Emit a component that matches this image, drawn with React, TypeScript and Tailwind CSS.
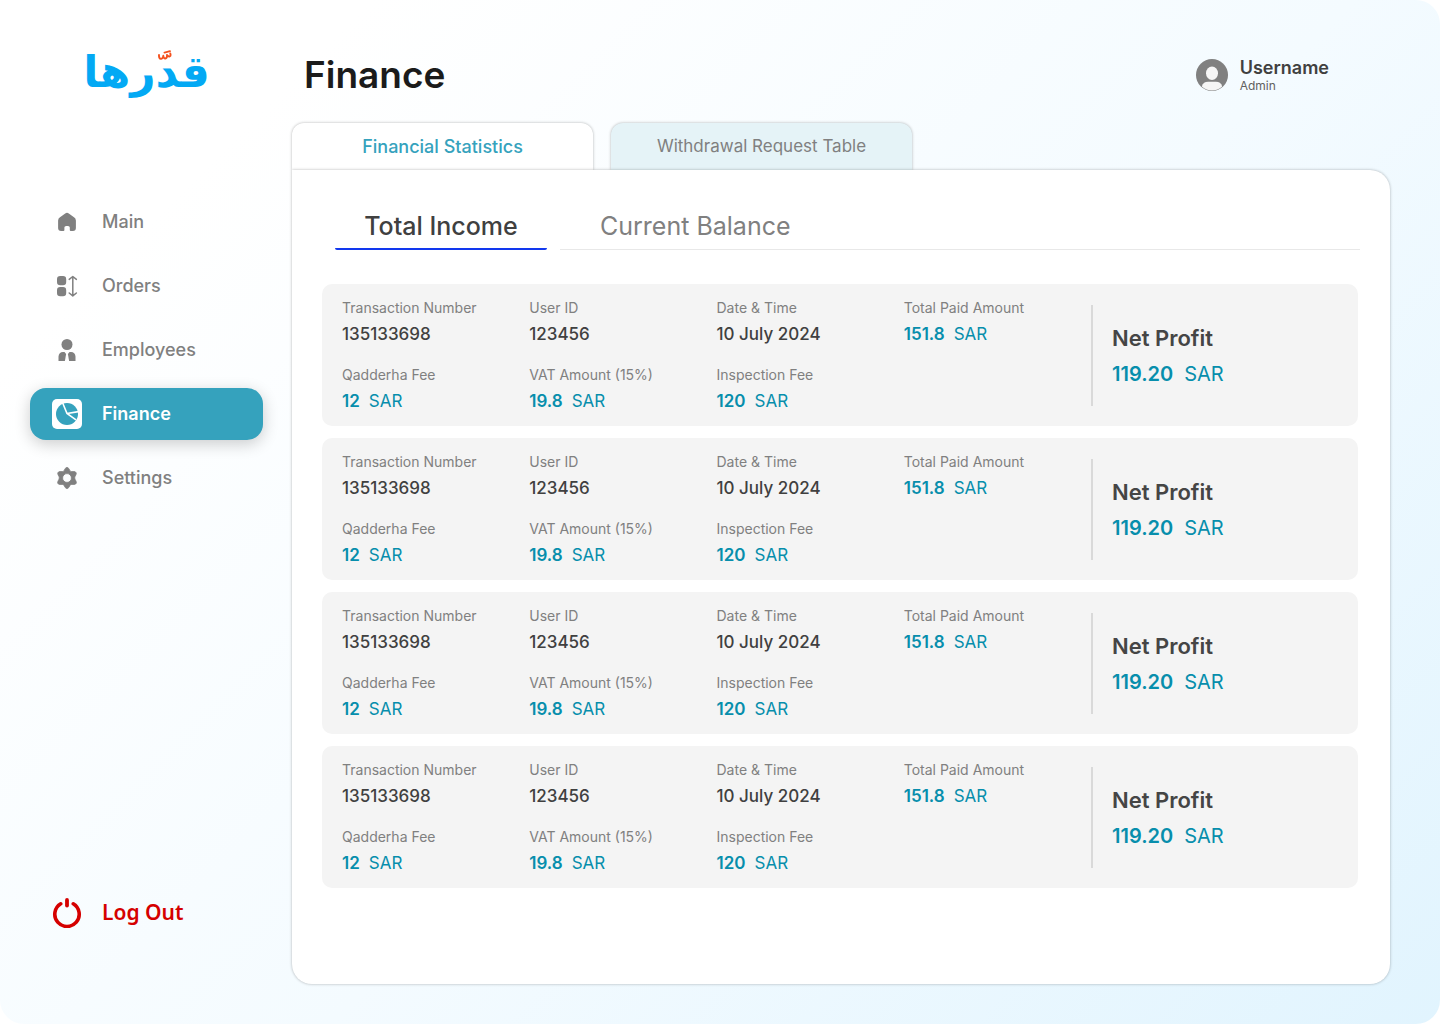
import type { ReactNode } from 'react'

const transactions = [1, 2, 3, 4]

function HomeIcon() {
  return (
    <svg viewBox="0 0 30 30" className="size-[30px]" fill="#808080" aria-hidden="true">
      <path d="M13.2 6.400a3 3 0 0 1 3.600 0l5.200 3.900a4 4 0 0 1 1.900 3.200V21a3 3 0 0 1-3 3h-2.200a.9.9 0 0 1-.9-.9v-2.300c0-1.100-.8-1.800-1.800-1.800h-1.800c-1 0-1.800.7-1.800 1.800v2.300a.9.9 0 0 1-.9.9H9.100a3 3 0 0 1-3-3v-7.500a4 4 0 0 1 1.900-3.200z" />
    </svg>
  )
}

function OrdersIcon() {
  return (
    <svg viewBox="0 0 30 30" className="size-[30px]" fill="#808080" aria-hidden="true">
      <rect x="5" y="5" width="9.200" height="9.200" rx="3.200" />
      <rect x="5" y="16" width="9.200" height="9.200" rx="3.200" />
      <path
        d="M20.800 5.800v18.800M17.200 8.400l3.600-2.900 3.600 2.900M17.200 22l3.600 2.900 3.600-2.900"
        fill="none"
        stroke="#808080"
        strokeWidth="1.500"
        strokeLinecap="round"
        strokeLinejoin="round"
      />
    </svg>
  )
}

function EmployeesIcon() {
  return (
    <svg viewBox="0 0 30 30" className="size-[30px]" fill="#808080" aria-hidden="true">
      <circle cx="15" cy="9.500" r="5.500" />
      <path d="M6.500 26v-4.200c0-3 2-4.900 4.400-4.900h1.600l1.600 2-1.200 7.100z" />
      <path d="M23.500 26v-4.200c0-3-2-4.900-4.400-4.900h-1.600l-1.600 2 1.200 7.100z" />
    </svg>
  )
}

function FinanceIcon() {
  return (
    <svg viewBox="0 0 30 30" className="size-[30px]" aria-hidden="true">
      <rect width="30" height="30" rx="5" fill="#fff" />
      <circle cx="15" cy="15" r="11" fill="#35a2bd" />
      <path d="M10.500 3.500 15 14.500l9 6.300M15 14.500l11.500-1.900" fill="none" stroke="#fff" strokeWidth="1.600" />
    </svg>
  )
}

function SettingsIcon() {
  return (
    <svg viewBox="0 0 30 30" className="size-[30px]" aria-hidden="true">
      <path
        fill="#808080"
        stroke="#808080"
        strokeWidth="0.800"
        fillRule="evenodd"
        d="M13.300 5.400a2 2 0 0 1 3.400 0l1.300 2.300c.4.700 1 .9 1.700.9h2.500a2 2 0 0 1 1.800 3l-1 2c-.4.800-.4 1.800 0 2.600l1.100 2.200a2 2 0 0 1-1.800 3h-2.600c-.8 0-1.300.3-1.700 1l-1.300 2.200a2 2 0 0 1-3.400 0L12 22.400c-.4-.7-.9-1-1.700-1H7.700a2 2 0 0 1-1.800-3L7 16.200c.4-.8.4-1.800 0-2.600l-1-2a2 2 0 0 1 1.800-3h2.500c.7 0 1.300-.2 1.700-.9zM15 10.600a4.400 4.400 0 1 0 0 8.800 4.400 4.400 0 0 0 0-8.800z"
      />
    </svg>
  )
}

function PowerIcon() {
  return (
    <svg viewBox="0 0 30 30" className="size-[30px]" fill="none" stroke="#d50000" strokeLinecap="round" aria-hidden="true">
      <path d="M8.700 5.800a12.200 12.200 0 1 0 12.600 0" strokeWidth="3.600" />
      <path d="M15 2v5.500" strokeWidth="3.800" />
    </svg>
  )
}

function Avatar() {
  return (
    <svg viewBox="0 0 32 32" className="size-8" aria-hidden="true">
      <circle cx="16" cy="16" r="16" fill="#808080" />
      <ellipse cx="16" cy="14.200" rx="6" ry="6.700" fill="#f5f5f5" />
      <path d="M5.800 27.500c1-3.400 3.200-4.700 6.200-4.700h8c3 0 5.200 1.300 6.200 4.700A15.400 15.400 0 0 1 16 31.400a15.400 15.400 0 0 1-10.200-3.900z" fill="#f5f5f5" />
    </svg>
  )
}

function Logo() {
  return (
    <a
      href="#home"
      lang="ar"
      dir="rtl"
      className="relative flex h-16 items-center justify-center text-[44px] leading-none font-bold text-[#03a9f4] font-['DejaVu_Sans',sans-serif]"
    >
      قدرها
      <svg viewBox="0 0 14 11" className="absolute top-2.5 left-[128px] h-[11px] w-3.5" fill="none" aria-hidden="true">
        <path
          d="M1 5c-.3 4.600 3.700 5.300 4.300.8C5.500 9.700 9.400 9.300 9 5M6.500 2.600 12 1.200M9 5c1.800 2.600 4.300 1.800 3.300-1.500"
          stroke="#f4511e"
          strokeWidth="1.900"
          strokeLinecap="round"
          strokeLinejoin="round"
        />
      </svg>
    </a>
  )
}

function Field({ label, children }: { label: string; children: ReactNode }) {
  return (
    <div className="flex flex-col gap-1">
      <dt className="text-sm leading-5 text-[#808080]">{label}</dt>
      <dd className="text-[17px] leading-6 font-medium text-[#404040]">{children}</dd>
    </div>
  )
}

function Money({ value }: { value: string }) {
  return (
    <span className="flex gap-[9px] text-[#078eac]">
      <span className="font-semibold">{value}</span>
      <span className="font-normal">SAR</span>
    </span>
  )
}

function TransactionCard() {
  return (
    <li className="flex items-center rounded-[10px] bg-[#f4f4f4] px-5 pt-3.5 pb-[13px]">
      <dl className="grid flex-1 grid-cols-4 gap-y-[19px]">
        <Field label="Transaction Number">135133698</Field>
        <Field label="User ID">123456</Field>
        <Field label="Date & Time">10 July 2024</Field>
        <Field label="Total Paid Amount">
          <Money value="151.8" />
        </Field>
        <Field label="Qadderha Fee">
          <Money value="12" />
        </Field>
        <Field label="VAT Amount (15%)">
          <Money value="19.8" />
        </Field>
        <Field label="Inspection Fee">
          <Money value="120" />
        </Field>
      </dl>
      <div className="flex h-[101px] w-[247px] flex-col justify-center gap-1 border-l-2 border-[#d9d9d9] pl-[19px]">
        <h3 className="text-[22px] leading-8 font-semibold text-[#454545]">Net Profit</h3>
        <p className="flex gap-[11px] text-xl leading-8 text-[#078eac]">
          <span className="font-semibold">119.20</span>
          <span>SAR</span>
        </p>
      </div>
    </li>
  )
}

const navItems = [
  { label: 'Main', icon: <HomeIcon />, active: false },
  { label: 'Orders', icon: <OrdersIcon />, active: false },
  { label: 'Employees', icon: <EmployeesIcon />, active: false },
  { label: 'Finance', icon: <FinanceIcon />, active: true },
  { label: 'Settings', icon: <SettingsIcon />, active: false },
]

export default function App() {
  return (
    <div className="bg-white font-['Inter',sans-serif]">
      <div className="flex min-h-screen rounded-3xl bg-linear-135 from-white from-15% via-[#f4fbff] via-55% to-[#e1f4fe]">
        <aside className="flex w-[292px] shrink-0 flex-col pt-10 pr-[29px] pb-[85px] pl-[30px]">
          <Logo />
          <nav className="mt-[92px]">
            <ul className="flex flex-col gap-3">
              {navItems.map((item) => (
                <li key={item.label}>
                  <a
                    href={`#${item.label.toLowerCase()}`}
                    aria-current={item.active ? 'page' : undefined}
                    className={
                      item.active
                        ? 'flex h-[52px] items-center gap-5 rounded-2xl bg-[#35a2bd] px-[22px] text-lg font-semibold text-white shadow-[0_4px_16px_rgba(0,0,0,0.2)]'
                        : 'flex h-[52px] items-center gap-5 px-[22px] text-lg font-medium text-[#808080]'
                    }
                  >
                    {item.icon}
                    {item.label}
                  </a>
                </li>
              ))}
            </ul>
          </nav>
          <button
            type="button"
            className="mt-auto flex h-[52px] cursor-pointer items-center gap-5 px-[22px] text-[21px] font-semibold text-[#d50000] font-['Noto_Sans',sans-serif]"
          >
            <PowerIcon />
            Log Out
          </button>
        </aside>

        <main className="flex min-w-0 flex-1 flex-col pr-[50px] pb-10">
          <header className="flex items-center justify-between pt-[50px] pr-[61px] pb-[23px] pl-3">
            <h1 className="text-[37px] leading-[50px] font-semibold text-[#1b1b1b]">Finance</h1>
            <div className="flex items-center gap-3">
              <Avatar />
              <div className="pt-0.5">
                <p className="text-lg leading-5 font-semibold text-[#404040]">Username</p>
                <p className="text-xs leading-4 text-[#606060]">Admin</p>
              </div>
            </div>
          </header>

          <div role="tablist" aria-label="Finance sections" className="flex gap-[18px]">
            <button
              type="button"
              role="tab"
              aria-selected="true"
              className="h-[47px] w-[301px] rounded-t-xl bg-white text-lg font-medium text-[#35a2bd] shadow-[0_0_3px_rgba(0,0,0,0.3)]"
            >
              Financial Statistics
            </button>
            <button
              type="button"
              role="tab"
              aria-selected="false"
              className="h-[47px] w-[301px] rounded-t-xl bg-[#e5f3f7] text-[17px] text-[#808080] shadow-[0_0_3px_rgba(0,0,0,0.3)]"
            >
              Withdrawal Request Table
            </button>
          </div>

          <section className="relative flex-1 rounded-[20px] rounded-tl-none bg-white px-[30px] pt-[35px] pb-10 shadow-[0_0_3px_rgba(0,0,0,0.3)]">
            <div role="tablist" aria-label="Totals" className="ml-[13px] flex gap-[13px]">
              <button
                type="button"
                role="tab"
                aria-selected="true"
                className="h-[45px] w-[212px] rounded-xs border-b-2 border-[#1238ee] text-[25px] font-medium text-[#404040]"
              >
                Total Income
              </button>
              <div className="flex flex-1 border-b border-[#e8e8e8]">
                <button type="button" role="tab" aria-selected="false" className="px-10 text-[25px] text-[#808080]">
                  Current Balance
                </button>
              </div>
            </div>
            <ul className="mt-[34px] mr-0.5 flex flex-col gap-3">
              {transactions.map((id) => (
                <TransactionCard key={id} />
              ))}
            </ul>
          </section>
        </main>
      </div>
    </div>
  )
}
